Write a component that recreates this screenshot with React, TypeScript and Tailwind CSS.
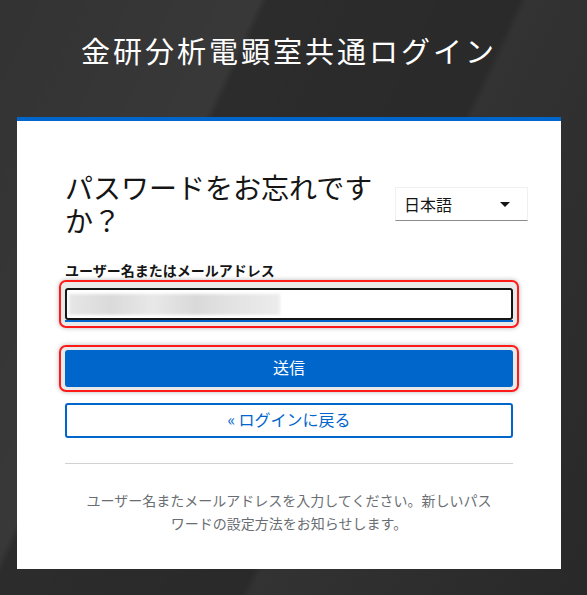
import { ReactNode } from "react";

const FONT = { fontFamily: '"Noto Sans CJK JP", "Noto Sans", sans-serif' };

// red annotation ring drawn around a field
const Highlight = ({ children, className }: { children: ReactNode; className?: string }) => (
  <div
    className={
      "-mx-[6px] border-2 border-[#ff1a1a] rounded-[7px] bg-[#e9e9e9] px-[4px] shadow-[0_0_5px_rgba(0,0,0,0.28)] " +
      (className ?? "")
    }>
    {children}
  </div>
);

export default function App() {
  return (
    <div
      style={FONT}
      className="min-h-screen w-full bg-[#2c2c2c] bg-[linear-gradient(115deg,rgba(255,255,255,0.03)_0%,rgba(255,255,255,0.06)_30%,rgba(0,0,0,0)_31%,rgba(0,0,0,0.05)_60%,rgba(255,255,255,0.03)_61%,rgba(0,0,0,0.08)_100%)] pt-[32px]">
      <div className="ml-[17px] w-[544px]">
        <h1 className="text-center text-[29px] leading-[36px] tracking-[3px] text-white">
          金研分析電顕室共通ログイン
        </h1>

        <div className="mt-[49px] border-t-4 border-[#0066cc] bg-white px-[48px] pt-[50px] pb-[34px]">
          <div className="-mr-[15px] flex items-center gap-[18px]">
            <h2 className="flex-1 text-[28px] leading-[33px] text-[#151515]">
              パスワードをお忘れですか？
            </h2>
            <div className="flex h-[34px] w-[133px] items-center justify-between border border-[#f0f0f0] border-b-[#8a8d90] pl-[8px] pr-[17px] text-[16px] text-[#151515]">
              <span>日本語</span>
              <span className="h-0 w-0 border-x-[5px] border-t-[5px] border-x-transparent border-t-[#151515]" />
            </div>
          </div>

          <label className="mt-[23px] block text-[14px] font-bold leading-[20px] text-[#151515]">
            ユーザー名またはメールアドレス
          </label>
          <Highlight className="pt-[6px] pb-[4px]">
            <div className="h-[34px] border-b-2 border-[#0066cc] bg-white">
              <div className="flex h-full items-center rounded-[3px] border-2 border-[#151515] px-[2px]">
                <div className="h-[21px] w-[211px] bg-[linear-gradient(90deg,#e6e6e6,#dadada_20%,#e8e8e8_40%,#d9d9d9_60%,#e4e4e4_80%,#ececec)] blur-[1.5px]" />
              </div>
            </div>
          </Highlight>

          <Highlight className="mt-[17px] py-[3px]">
            <button className="h-[37px] w-full rounded-[3px] bg-[#0066cc] pb-[3px] text-[16px] text-white">
              送信
            </button>
          </Highlight>

          <button className="mt-[11px] h-[35px] w-full rounded-[3px] border-2 border-[#0066cc] pb-[3px] text-[16px] text-[#0066cc]">
            « ログインに戻る
          </button>

          <div className="mt-[25px] h-px bg-[#d2d2d2]" />

          <p className="mt-[25px] px-[18px] text-center text-[14px] leading-[23px] text-[#6a6e73]">
            ユーザー名またメールアドレスを入力してください。新しいパスワードの設定方法をお知らせします。
          </p>
        </div>
      </div>
    </div>
  );
}
